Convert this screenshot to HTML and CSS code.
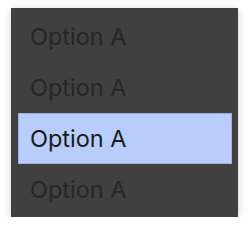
FILE: index.html
```html
<!DOCTYPE html>
<html>
<head>
<meta charset="utf-8">
<link rel="stylesheet" href="styles.css">
</head>
<body>
<div class="menu">
  <div class="option">Option A</div>
  <div class="option">Option A</div>
  <div class="option selected">Option A</div>
  <div class="option">Option A</div>
</div>
</body>
</html>
```
FILE: styles.css
```css
html, body {
  margin: 0;
  padding: 0;
  background: #ffffff;
}
body {
  padding: 8px 0 0 11px;
  font-family: Inter, "Noto Sans", sans-serif;
}
.menu {
  width: 227px;
  height: 209px;
  box-sizing: border-box;
  padding: 3px 6px 2px 7px;
  background: #404040;
  box-shadow: 0 2px 8px rgba(0, 0, 0, 0.18);
  display: flex;
  flex-direction: column;
}
.option {
  height: 51px;
  flex: none;
  box-sizing: border-box;
  display: flex;
  align-items: center;
  padding-left: 12px;
  font-size: 23.5px;
  color: #262626;
}
.option.selected {
  background: #b8cdfb;
  border: 1px solid #9fb1d9;
  padding-left: 11px;
  color: #1a1a1a;
}
```
